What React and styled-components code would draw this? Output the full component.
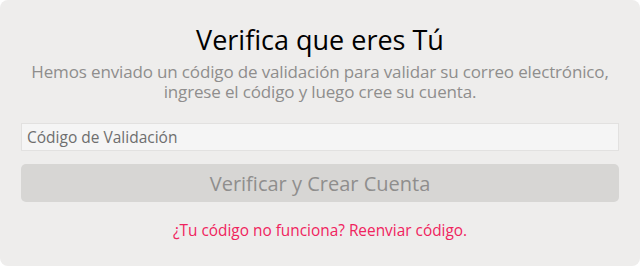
import React from 'react'
import styled, { createGlobalStyle } from 'styled-components'

const GlobalStyle = createGlobalStyle`
  html, body {
    margin: 0;
    padding: 0;
    background: #ffffff;
  }
  body {
    font-family: "Open Sans", "Noto Sans", sans-serif;
  }
`

const Card = styled.div`
  box-sizing: border-box;
  width: 640px;
  height: 266px;
  background: #eeedec;
  border-radius: 8px;
  padding: 20px 21px 0;
  display: flex;
  flex-direction: column;
  align-items: stretch;
`

const Title = styled.h1`
  margin: 0;
  font-weight: 400;
  font-size: 27px;
  line-height: 40px;
  color: #000;
  text-align: center;
`

const Subtitle = styled.div`
  margin: 2px 0 0;
  display: flex;
  flex-direction: column;
  color: #8f8e8d;
  text-align: center;
`

const SubLine = styled.span`
  display: block;
  height: 20px;
  font-size: 17px;
  line-height: 20px;
  letter-spacing: -0.15px;
`

const Input = styled.input`
  box-sizing: border-box;
  margin-top: 21px;
  width: 100%;
  height: 28px;
  padding: 0 5px;
  background: #f5f5f5;
  border: 1px solid #e2e1e0;
  font-family: inherit;
  font-size: 15.5px;
  color: #333;
  outline: none;

  &::placeholder {
    color: #6e6e6e;
  }
`

const Button = styled.button`
  box-sizing: border-box;
  margin-top: 13px;
  width: 100%;
  height: 38px;
  border: none;
  border-radius: 5px;
  background: ${(p) => (p.disabled ? '#d7d6d4' : '#bcbab7')};
  color: #8f8e8d;
  font-family: inherit;
  font-size: 20px;
  cursor: default;
`

const Resend = styled.a`
  margin-top: 18px;
  text-align: center;
  font-size: 15.4px;
  color: #f0245e;
  text-decoration: none;
`

const App = () => {
  return (
    <>
      <GlobalStyle />
      <Card>
        <Title>Verifica que eres Tú</Title>
        <Subtitle>
          <SubLine>Hemos enviado un código de validación para validar su correo electrónico,</SubLine>
          <SubLine>ingrese el código y luego cree su cuenta.</SubLine>
        </Subtitle>
        <Input placeholder="Código de Validación" />
        <Button disabled>Verificar y Crear Cuenta</Button>
        <Resend href="#">¿Tu código no funciona? Reenviar código.</Resend>
      </Card>
    </>
  )
}

export default App
